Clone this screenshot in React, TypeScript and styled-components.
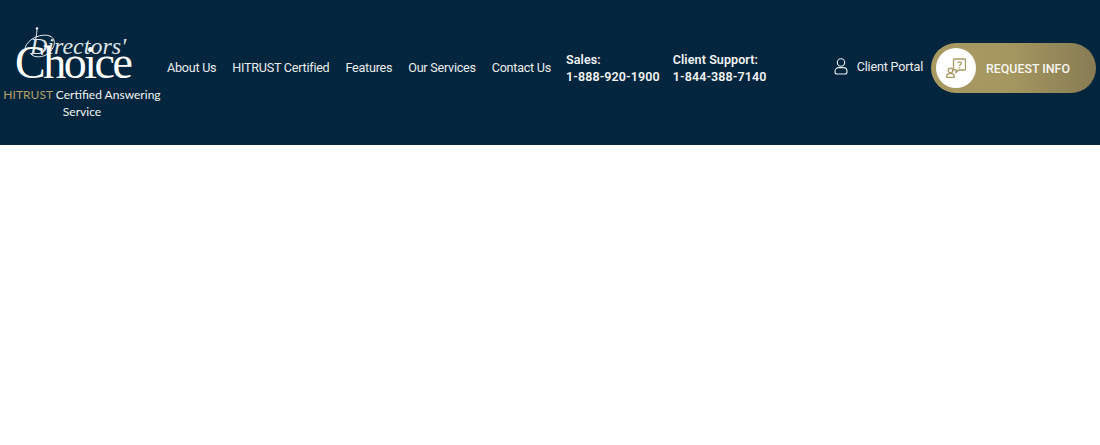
import React from "react";
import styled, { createGlobalStyle } from "styled-components";

const Global = createGlobalStyle`
  html, body { margin: 0; padding: 0; background: #fff; }
  * { box-sizing: border-box; }
`;

const Page = styled.div`
  width: 1100px;
  height: 445px;
  background: #fff;
  overflow: hidden;
`;

const Header = styled.header`
  height: 145px;
  background: #03253d;
  display: flex;
  align-items: flex-start;
  color: #fff;
  font-family: Roboto, "Liberation Sans", sans-serif;
`;

const Brand = styled.div`
  width: 164px;
  flex: none;
  padding-top: 27px;
  display: flex;
  flex-direction: column;
  align-items: center;
`;

const Logo = styled.div`
  position: relative;
  width: 164px;
  height: 54px;
`;

const LogoScript = styled.span`
  position: absolute;
  left: 30px;
  top: 5px;
  font-family: "Liberation Serif", serif;
  font-style: italic;
  font-size: 24px;
  line-height: 28px;
  color: #dfe4e8;
  white-space: nowrap;
`;

const LogoMain = styled.span`
  position: absolute;
  left: 15px;
  top: 14px;
  font-family: "Liberation Serif", serif;
  font-size: 46px;
  line-height: 44px;
  letter-spacing: -2.5px;
  color: #fff;
  white-space: nowrap;
`;

const LogoFlourish = styled.svg`
  position: absolute;
  left: 22px;
  top: -2px;
`;

const Tagline = styled.p`
  margin: 5px 0 0;
  width: 164px;
  text-align: center;
  font-family: Lato, sans-serif;
  font-size: 12.05px;
  line-height: 17px;
  color: #f1f3f5;
`;

const Gold = styled.span`
  color: #b5a266;
`;

const Nav = styled.nav`
  display: flex;
  gap: 16px;
  margin-left: 3px;
  padding-top: 59px;
`;

const NavLink = styled.a`
  font-size: 12.6px;
  letter-spacing: -0.25px;
  line-height: 18px;
  color: #e9edf0;
  white-space: nowrap;
`;

const Phones = styled.div`
  display: flex;
  gap: 13px;
  margin-left: 15px;
  padding-top: 51px;
`;

const Phone = styled.div`
  font-size: 12.5px;
  font-weight: 600;
  line-height: 17px;
  color: #f2f4f6;
  white-space: nowrap;
  letter-spacing: 0.1px;
`;

const Portal = styled.a`
  display: flex;
  align-items: center;
  gap: 9px;
  margin-left: auto;
  margin-top: 57px;
  font-size: 12.6px;
  letter-spacing: -0.2px;
  line-height: 20px;
  color: #e9edf0;
  white-space: nowrap;
`;

const PortalIcon = styled.svg`
  margin-top: -2px;
`;

const Cta = styled.a`
  display: flex;
  align-items: center;
  gap: 10px;
  width: 165px;
  height: 50px;
  margin: 43px 4px 0 8px;
  padding-left: 5px;
  flex: none;
  border-radius: 25px;
  background: linear-gradient(90deg, #a99a62 0%, #a4965f 50%, #877b54 100%);
  font-size: 12.4px;
  font-weight: 500;
  color: #f7f6f1;
  white-space: nowrap;
`;

const CtaIcon = styled.span`
  width: 40px;
  height: 40px;
  border-radius: 50%;
  background: #fff;
  display: flex;
  align-items: center;
  justify-content: center;
`;

export default function App() {
  return (
    <Page>
      <Global />
      <Header>
        <Brand>
          <Logo>
            <LogoFlourish width="100" height="40" viewBox="0 0 100 40" fill="none" stroke="#fff" strokeWidth="0.9">
              <path d="M3 23C6 13 20 8 28 11C36 15 32 25 24 30C18 33 11 32 9 29" />
              <path d="M15 5C14 15 12 25 10 30" />
              <circle cx="15" cy="3.500" r="1.200" fill="#fff" stroke="none" />
            </LogoFlourish>
            <LogoScript>Directors'</LogoScript>
            <LogoMain>Choice</LogoMain>
          </Logo>
          <Tagline>
            <Gold>HITRUST</Gold> Certified Answering Service
          </Tagline>
        </Brand>
        <Nav>
          <NavLink>About Us</NavLink>
          <NavLink>HITRUST Certified</NavLink>
          <NavLink>Features</NavLink>
          <NavLink>Our Services</NavLink>
          <NavLink>Contact Us</NavLink>
        </Nav>
        <Phones>
          <Phone>Sales:<br />1-888-920-1900</Phone>
          <Phone>Client Support:<br />1-844-388-7140</Phone>
        </Phones>
        <Portal>
          <PortalIcon width="14" height="17" viewBox="0 0 14 17" fill="none" stroke="#e9edf0" strokeWidth="1.1">
            <circle cx="7" cy="4.500" r="3.700" />
            <path d="M1 13.500C1 10.800 3 9.600 4.600 9.600H9.400C11 9.600 13 10.800 13 13.500V14C13 15.300 12.200 16 11 16H3C1.800 16 1 15.300 1 14Z" />
          </PortalIcon>
          Client Portal
        </Portal>
        <Cta>
          <CtaIcon>
            <svg width="20" height="20" viewBox="0 0 20 20" fill="none" stroke="#a99a62" strokeWidth="1.300">
              <path d="M8.500 1H18.500C19 1 19.500 1.500 19.500 2V11C19.500 11.500 19 12 18.500 12H12.500L10 14.500V12H8.500C8 12 7.500 11.500 7.500 11V2C7.500 1.500 8 1 8.500 1Z" />
              <path d="M11.800 5C12 3.500 15.300 3.300 15.300 5.200C15.300 6.500 13.600 6.500 13.600 8" strokeWidth="1.300" />
              <circle cx="13.600" cy="9.700" r="0.800" fill="#a99a62" stroke="none" />
              <circle cx="4.500" cy="12.500" r="2.300" />
              <path d="M0.700 19.500V18.500C0.700 16.500 2.300 15.600 3.500 15.600H5.500C6.800 15.600 8.300 16.500 8.300 18.500V19.500Z" />
            </svg>
          </CtaIcon>
          REQUEST INFO
        </Cta>
      </Header>
    </Page>
  );
}
